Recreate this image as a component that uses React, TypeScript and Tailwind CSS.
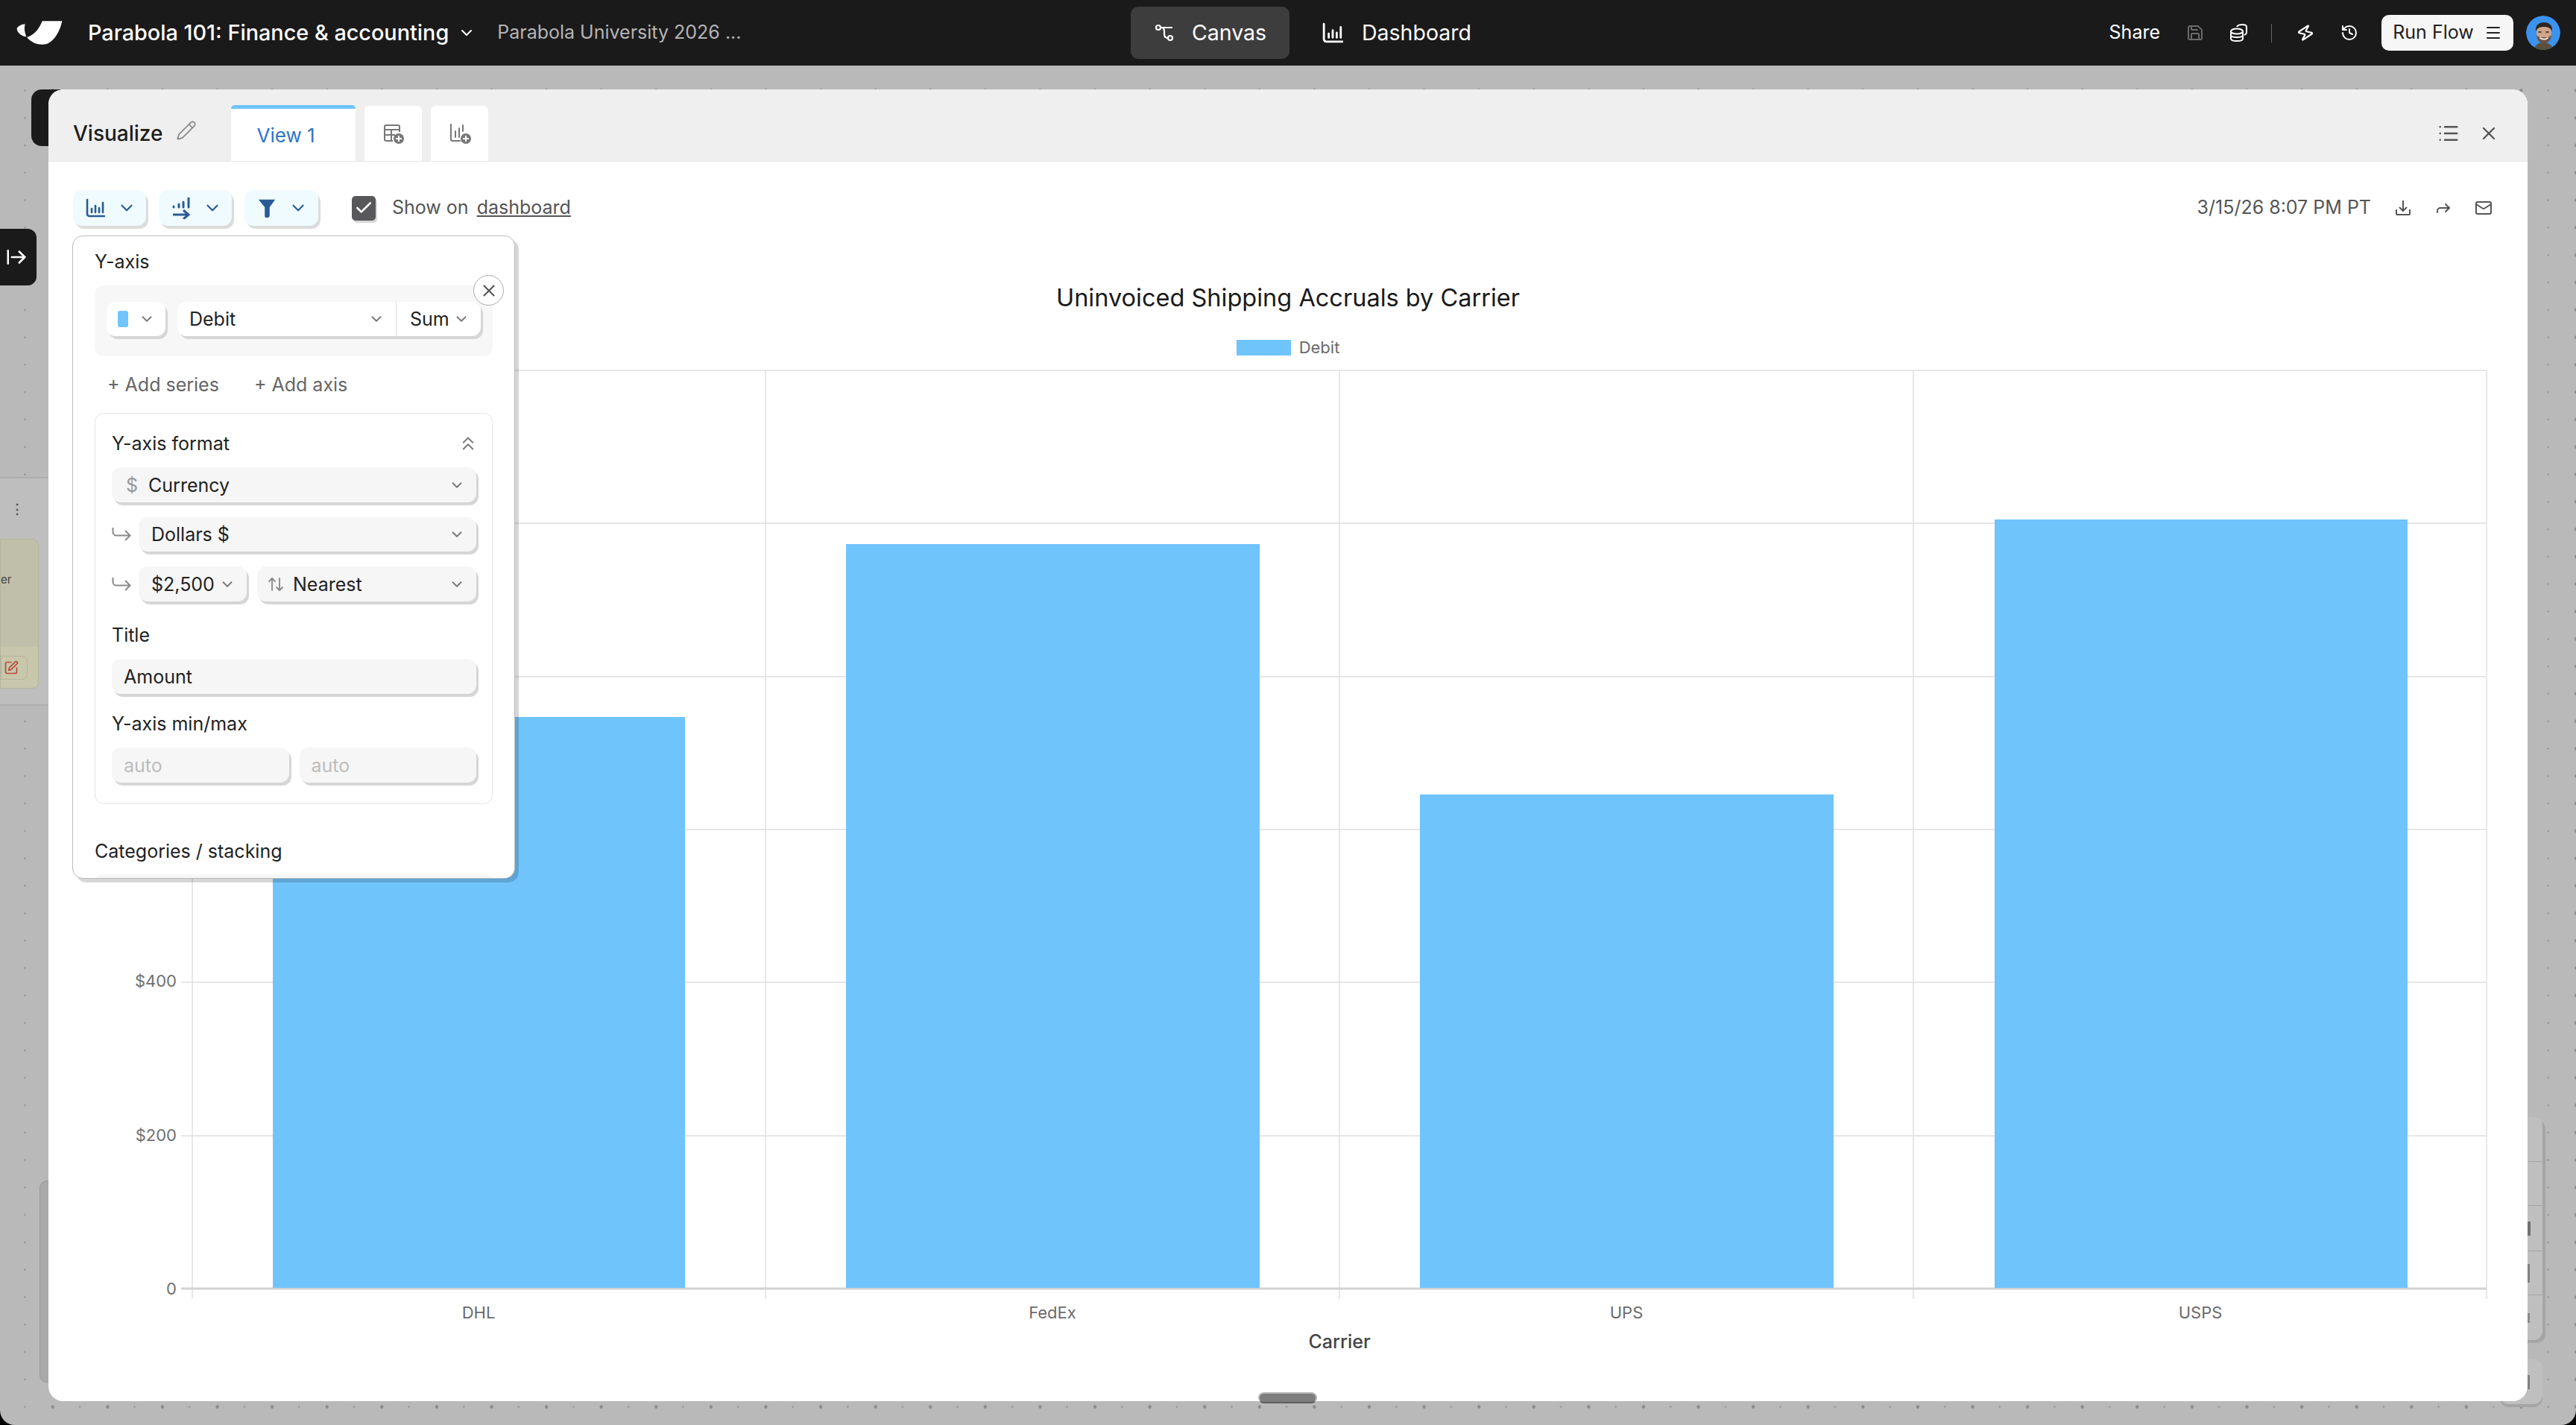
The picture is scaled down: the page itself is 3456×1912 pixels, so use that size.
import type { ReactNode } from 'react'
import {
  ArrowRightFromLine,
  ArrowUpDown,
  Check,
  ChevronDown,
  ChevronsUp,
  Forward,
  History,
  List,
  Mail,
  Menu,
  Pencil,
  Save,
  SquarePen,
  X,
  Zap,
} from 'lucide-react'

const bars = [
  { label: 'DHL', x: 366, top: 962, right: 919, center: 642 },
  { label: 'FedEx', x: 1135, top: 730, right: 1690, center: 1412 },
  { label: 'UPS', x: 1905, top: 1066, right: 2460, center: 2182 },
  { label: 'USPS', x: 2676, top: 697, right: 3230, center: 2952 },
]

const gridY = [497, 702, 908, 1113, 1318, 1524]
const gridX = [258, 1027, 1797, 2567, 3336]

function BarIcon({ className }: { className?: string }) {
  return (
    <svg viewBox="0 0 26 26" fill="none" className={className}>
      <path d="M2 2v19a3 3 0 0 0 3 3h20" stroke="currentColor" strokeWidth="2.6" strokeLinecap="round" />
      <path d="M8 14v5M13 10v9M18 13v6M23 6v13" stroke="currentColor" strokeWidth="2.6" strokeLinecap="round" />
    </svg>
  )
}

function HookArrow() {
  return (
    <svg viewBox="0 0 26 20" fill="none" className="mr-[10px] h-[20px] w-[26px] shrink-0 text-[#8a8a8a]">
      <path d="M1.5 1v6a4.5 4.5 0 0 0 4.5 4.5h18M18 5l6.5 6.5L18 18" stroke="currentColor" strokeWidth="2" />
    </svg>
  )
}

function Logo() {
  return (
    <svg viewBox="0 0 270 180" className="h-[60px] w-[90px]">
      <path d="M38 72C44 62 58 56 71 55C66 72 70 90 76 106C60 104 38 92 38 72Z" fill="#fff" />
      <path d="M140 43H220C212 82 190 122 160 134C128 144 96 130 78 108C108 100 128 74 140 43Z" fill="#fff" />
    </svg>
  )
}

function Avatar() {
  return (
    <svg viewBox="0 0 46 46" className="h-[46px] w-[46px] rounded-full">
      <circle cx="23" cy="23" r="23" fill="#3b93ef" />
      <path d="M10 46c2-7 7-10 13-10s12 3 14 10Z" fill="#5a5040" />
      <ellipse cx="24" cy="23" rx="10" ry="13" fill="#cfa488" />
      <path d="M13 21c-1-9 5-12 11-12s12 3 11 12c-2-4-5-6-11-6s-9 2-11 6Z" fill="#2e2622" />
      <path d="M14 26c1 8 5 11 10 11s9-3 10-11c-2 2-3 3-5 3H19c-2 0-3-1-5-3Z" fill="#6d5040" />
      <path d="M19 30c3 2 7 2 10 0" stroke="#f5ebe2" strokeWidth="2" strokeLinecap="round" fill="none" />
      <path d="M17 22h3M27 22h3" stroke="#2e2622" strokeWidth="1.6" strokeLinecap="round" />
    </svg>
  )
}

function Select({
  className,
  children,
  bg = 'bg-[#f6f6f6]',
  chevron = true,
}: {
  className?: string
  children: ReactNode
  bg?: string
  chevron?: boolean
}) {
  return (
    <div className={`flex items-center rounded-[12px] shadow-[3px_4px_0_0_#d6d6d6] ${bg} ${className ?? ''}`}>
      {children}
      {chevron && <ChevronDown className="ml-auto h-[22px] w-[22px] text-[#777]" strokeWidth={2} />}
    </div>
  )
}

function ToolButton({ children, className }: { children: ReactNode; className: string }) {
  return (
    <div
      className={`flex h-[48px] items-center rounded-[12px] bg-[#f0fbff] pl-[17px] text-[#2b5b94] shadow-[3px_4px_0_0_#dcdcdc] ${className}`}
    >
      {children}
      <ChevronDown className="ml-[16px] h-[26px] w-[26px]" strokeWidth={2} />
    </div>
  )
}

function BackgroundCanvas() {
  return (
    <>
      <div className="absolute left-[42px] top-[32px] h-[76px] w-[40px] rounded-l-[14px] bg-[#1b1a1b]" />
      <div className="absolute left-0 top-[219px] flex h-[76px] w-[49px] items-center justify-end rounded-r-[12px] bg-[#1b1a1b] pr-[12px] text-white">
        <ArrowRightFromLine className="h-[30px] w-[30px]" strokeWidth={2} />
      </div>
      <div className="absolute left-0 top-[552px] h-[307px] w-[70px] border-y-2 border-[#adadad] bg-[#bebebe]">
        <span className="absolute left-[14px] top-[32px] text-[18px] font-bold leading-[18px] text-[#555]">⋮</span>
        <div className="absolute left-0 top-[81px] h-[201px] w-[52px] rounded-r-[8px] border border-[#b5b5a0] bg-[#c0bfa9]">
          <span className="absolute left-0 top-[40px] text-[15px] leading-[28px] text-[#444]">er</span>
          <div className="absolute bottom-0 left-0 h-[55px] w-full rounded-br-[8px] bg-[#c8c7ac]">
            <div className="absolute left-0 top-[12px] flex h-[32px] w-[36px] items-center rounded-r-[8px] border border-[#b5b49c] pl-[3px]">
              <SquarePen className="h-[20px] w-[20px] text-[#b8483f]" strokeWidth={2} />
            </div>
          </div>
        </div>
      </div>
      <div className="absolute left-[53px] top-[1496px] h-[271px] w-[20px] rounded-l-[10px] border border-[#999] bg-[#a9a9a9]" />
      <div className="absolute left-[3380px] top-[1411px] flex h-[299px] w-[31px] flex-col rounded-r-[12px] bg-[#bfbfbf] shadow-[4px_4px_0_0_#a5a5a5]">
        <div className="h-[60px] border-b border-[#a5a5a5]" />
        <div className="h-[59px] border-b border-[#a5a5a5]" />
        <div className="flex h-[61px] items-center justify-end border-b border-[#a5a5a5] pr-[16px]">
          <div className="h-[19px] w-[4px] bg-[#707070]" />
        </div>
        <div className="flex h-[59px] items-center justify-end border-b border-[#a5a5a5] pr-[17px]">
          <div className="h-[25px] w-[3px] bg-[#808080]" />
        </div>
        <div className="flex flex-1 items-center justify-end pr-[17px]">
          <div className="h-[13px] w-[3px] bg-[#8a8a8a]" />
        </div>
      </div>
      <div className="absolute left-[3354px] top-[1736px] flex h-[60px] w-[57px] items-center justify-end rounded-[12px] bg-[#bfbfbf] pr-[17px] shadow-[0_4px_0_0_#a5a5a5]">
        <div className="h-[19px] w-[3px] bg-[#808080]" />
      </div>
    </>
  )
}

function Chart() {
  return (
    <svg viewBox="65 485 3326 1345" className="mt-[8px] block h-[1345px] w-[3326px]">
      {gridY.map((y) => (
        <line key={y} x1="243" x2="3336" y1={y} y2={y} stroke="#e6e6e6" strokeWidth="2" />
      ))}
      {gridX.map((x) => (
        <line key={x} x1={x} x2={x} y1="497" y2="1743" stroke="#e0e0e0" strokeWidth="1.5" />
      ))}
      <line x1="243" x2="3336" y1="1729" y2="1729" stroke="#d2d2d2" strokeWidth="3" />
      {bars.map((b) => (
        <rect key={b.label} x={b.x} y={b.top} width={b.right - b.x} height={1728 - b.top} fill="#70c4fc" />
      ))}
      <g fill="#707070" fontSize="22" textAnchor="end">
        <text x="237" y="1531">$200</text>
        <text x="237" y="1324">$400</text>
        <text x="237" y="1737">0</text>
      </g>
      <g fill="#6b6b6b" fontSize="22" textAnchor="middle">
        {bars.map((b) => (
          <text key={b.label} x={b.center} y="1769">{b.label}</text>
        ))}
      </g>
      <text x="1797" y="1809" fill="#444" fontSize="25" fontWeight="500" textAnchor="middle">Carrier</text>
    </svg>
  )
}

function AxisPopover() {
  return (
    <div className="absolute left-[32px] top-[196px] h-[863px] w-[594px] overflow-hidden rounded-[14px] border border-[#bbb] bg-white pl-[29px] pr-[29px] pt-[19px] text-[25px] leading-[30px] text-[#222] shadow-[5px_5px_0_0_rgba(0,0,0,0.16)]">
      <div className="h-[30px]">Y-axis</div>
      <div className="mt-[17px] flex h-[95px] gap-[16px] rounded-[12px] bg-[#f7f7f7] px-[16px] pt-[22px]">
        <Select className="h-[46px] w-[79px] pl-[15px] pr-[14px]" bg="bg-white">
          <div className="h-[22px] w-[14px] rounded-[3px] bg-[#70c4fc]" />
        </Select>
        <div className="flex h-[46px] flex-1 items-center rounded-[12px] bg-white shadow-[3px_4px_0_0_#d6d6d6]">
          <div className="flex h-full flex-1 items-center border-r border-[#ddd] pl-[16px] pr-[15px]">
            Debit
            <ChevronDown className="ml-auto h-[22px] w-[22px] text-[#777]" strokeWidth={2} />
          </div>
          <div className="flex h-full w-[113px] items-center pl-[18px] pr-[15px]">
            Sum
            <ChevronDown className="ml-auto h-[22px] w-[22px] text-[#777]" strokeWidth={2} />
          </div>
        </div>
      </div>
      <div className="mt-[23px] flex h-[30px] gap-[47px] pl-[17px] text-[#666]">
        <span>+ Add series</span>
        <span>+ Add axis</span>
      </div>
      <div className="mt-[23px] h-[525px] rounded-[12px] border border-[#e4e4e4] pl-[22px] pr-[21px] pt-[25px]">
        <div className="flex h-[30px] items-center justify-between">
          <span>Y-axis format</span>
          <ChevronsUp className="mr-[-4px] h-[30px] w-[30px] text-[#777]" strokeWidth={1.5} />
        </div>
        <Select className="mt-[17px] h-[47px] pl-[19px] pr-[15px]">
          <span className="mr-[14px] text-[#999]">$</span>
          Currency
        </Select>
        <div className="mt-[20px] flex items-center">
          <HookArrow />
          <Select className="h-[46px] flex-1 pl-[17px] pr-[15px]">Dollars $</Select>
        </div>
        <div className="mt-[20px] flex items-center">
          <HookArrow />
          <Select className="h-[47px] w-[145px] pl-[17px] pr-[15px]">$2,500</Select>
          <Select className="ml-[14px] h-[47px] flex-1 pl-[13px] pr-[15px]">
            <ArrowUpDown className="mr-[11px] h-[24px] w-[24px] text-[#888]" strokeWidth={1.8} />
            Nearest
          </Select>
        </div>
        <div className="mt-[30px] h-[30px]">Title</div>
        <Select className="mt-[17px] h-[47px] pl-[16px]" chevron={false}>Amount</Select>
        <div className="mt-[25px] h-[30px]">Y-axis min/max</div>
        <div className="mt-[17px] flex gap-[14px]">
          <Select className="h-[47px] flex-1 pl-[16px] text-[#bdbdbd]" chevron={false}>auto</Select>
          <Select className="h-[47px] flex-1 pl-[16px] text-[#bdbdbd]" chevron={false}>auto</Select>
        </div>
      </div>
      <div className="mt-[48px] h-[30px]">Categories / stacking</div>
      <div className="mt-[16px] h-[20px] rounded-t-[12px] bg-[#f7f7f7]" />
      <button className="absolute left-[537px] top-[52px] flex h-[41px] w-[41px] items-center justify-center rounded-full border border-[#aaa] bg-white text-[#555]">
        <X className="h-[26px] w-[26px]" strokeWidth={2} />
      </button>
    </div>
  )
}

function VisualizeModal() {
  return (
    <div className="absolute left-[65px] top-[32px] flex h-[1760px] w-[3326px] flex-col rounded-[20px] bg-white">
      <div className="flex h-[97px] shrink-0 items-end rounded-t-[20px] border-b border-[#e6e6e6] bg-[#efefef] pl-[33px] pr-[38px]">
        <div className="flex h-[74px] w-[212px] items-center text-[28px] font-medium text-[#1c1c1c]">
          Visualize
          <Pencil className="ml-[18px] mt-[-8px] h-[28px] w-[28px] text-[#888]" strokeWidth={1.5} />
        </div>
        <div className="flex h-[75px] w-[167px] items-center justify-center rounded-t-[5px] border-t-[5px] border-[#70c4fc] bg-white pr-[20px] text-[26px] text-[#2f75c6]">
          View 1
        </div>
        <div className="ml-[12px] flex h-[74px] w-[77px] items-center justify-center rounded-t-[6px] bg-white text-[#777]">
          <svg viewBox="0 0 30 30" fill="none" className="h-[30px] w-[30px]">
            <path d="M14 25H5a2 2 0 0 1-2-2V6a2 2 0 0 1 2-2h16a2 2 0 0 1 2 2v7M3 10h20M3 17h14M12 10v15" stroke="currentColor" strokeWidth="2" />
            <circle cx="22" cy="22" r="7" fill="currentColor" />
            <path d="M22 18v8M18 22h8" stroke="#fff" strokeWidth="2" />
          </svg>
        </div>
        <div className="ml-[12px] flex h-[74px] w-[77px] items-center justify-center rounded-t-[6px] bg-white text-[#777]">
          <svg viewBox="0 0 30 30" fill="none" className="h-[30px] w-[30px]">
            <path d="M3 3v20a2 2 0 0 0 2 2h10M9 12v8M14 8v12M19 4v8" stroke="currentColor" strokeWidth="2" strokeLinecap="round" />
            <circle cx="23" cy="22" r="7" fill="currentColor" />
            <path d="M23 18v8M19 22h8" stroke="#fff" strokeWidth="2" />
          </svg>
        </div>
        <div className="ml-auto flex h-[74px] items-center gap-[25px] text-[#555]">
          <List className="h-[30px] w-[30px]" strokeWidth={2} />
          <X className="h-[28px] w-[28px]" strokeWidth={2} />
        </div>
      </div>

      <div className="mt-[38px] flex h-[48px] shrink-0 items-center pl-[33px] pr-[47px]">
        <ToolButton className="w-[98px] gap-0">
          <BarIcon className="h-[26px] w-[26px]" />
        </ToolButton>
        <ToolButton className="ml-[17px] w-[98px]">
          <svg viewBox="0 0 26 30" fill="none" className="h-[30px] w-[26px]">
            <path d="M3 13v1M10 10v4M16 7v7M23 2v12" stroke="currentColor" strokeWidth="3" strokeLinecap="round" />
            <path d="M2 24h21M16 18l7 6-7 6" stroke="currentColor" strokeWidth="3" />
          </svg>
        </ToolButton>
        <ToolButton className="ml-[17px] w-[99px]">
          <svg viewBox="0 0 26 30" className="h-[28px] w-[26px]">
            <path d="M1 3h24l-8 11v13l-2 2h-4l-1-2V14Z" fill="currentColor" />
          </svg>
        </ToolButton>
        <div className="ml-[45px] flex h-[33px] w-[32px] items-center justify-center rounded-[5px] bg-[#58585a] shadow-[2px_3px_0_0_#d8d8d8]">
          <Check className="h-[26px] w-[26px] text-white" strokeWidth={2.4} />
        </div>
        <span className="ml-[22px] text-[25px] text-[#555]">Show on</span>
        <span className="ml-[11px] text-[25px] text-[#555] underline">dashboard</span>
        <span className="ml-auto text-[25px] text-[#555]">3/15/26 8:07 PM PT</span>
        <svg viewBox="0 0 24 24" fill="none" className="ml-[31px] h-[24px] w-[24px] text-[#555]">
          <path d="M12 2v13M7 11l5 5 5-5M3 14v6a1 1 0 0 0 1 1h16a1 1 0 0 0 1-1v-6" stroke="currentColor" strokeWidth="2" />
        </svg>
        <Forward className="ml-[30px] h-[24px] w-[24px] text-[#555]" strokeWidth={2} />
        <Mail className="ml-[30px] h-[24px] w-[24px] text-[#555]" strokeWidth={2} />
      </div>

      <div className="mt-[77px] text-center text-[32.5px] leading-[40px] text-[#1a1a1a]">
        Uninvoiced Shipping Accruals by Carrier
      </div>
      <div className="mt-[36px] flex h-[21px] items-center justify-center gap-[11px] text-[22px] text-[#6b6b6b]">
        <div className="h-[21px] w-[73px] bg-[#70c4fc]" />
        Debit
      </div>
      <Chart />
      <AxisPopover />
      <div className="absolute left-[1623px] top-[1748px] h-[15px] w-[79px] rounded-full border-2 border-[#b5b5b5] border-b-[#5e5e5e] bg-[#7d7d7d]" />
    </div>
  )
}

export default function App() {
  return (
    <div className="flex h-[1912px] w-full flex-col overflow-hidden bg-black font-['Inter',sans-serif]">
      <header className="flex h-[88px] shrink-0 items-center bg-[#1b1a1b] text-white">
        <div className="flex w-[1517px] shrink-0 items-center pl-[10px]">
          <Logo />
          <span className="ml-[18px] text-[28.8px] font-medium">Parabola 101: Finance &amp; accounting</span>
          <ChevronDown className="ml-[12px] h-[24px] w-[24px]" strokeWidth={2} />
          <span className="ml-[29px] text-[25px] text-[#b4b4b4]">Parabola University 2026 ...</span>
        </div>
        <nav className="flex items-center text-[28.5px]">
          <div className="flex h-[70px] w-[213px] items-center rounded-[10px] bg-[#3e3d3e] pl-[32px]">
            <svg viewBox="0 0 26 26" fill="none" className="h-[26px] w-[26px]">
              <circle cx="5" cy="6" r="3" stroke="currentColor" strokeWidth="2.2" />
              <circle cx="21" cy="20" r="3" stroke="currentColor" strokeWidth="2.2" />
              <path d="M8 6h16M9 6c3 0 4 2 4 5v4c0 3 2 5 5 5" stroke="currentColor" strokeWidth="2.2" />
            </svg>
            <span className="ml-[24px]">Canvas</span>
          </div>
          <BarIcon className="ml-[44px] h-[28px] w-[28px]" />
          <span className="ml-[25px]">Dashboard</span>
        </nav>
        <div className="ml-auto flex items-center pr-[21px]">
          <span className="text-[25px]">Share</span>
          <Save className="ml-[35px] h-[24px] w-[24px] text-[#6b6b6b]" strokeWidth={2} />
          <svg viewBox="0 0 24 24" fill="none" className="ml-[34px] h-[24px] w-[24px]">
            <ellipse cx="10" cy="10" rx="8" ry="3.5" stroke="currentColor" strokeWidth="2" />
            <path d="M2 10v10c0 2 4 3 8 3s8-1 8-3V10M2 15c0 2 4 3 8 3s8-1 8-3M10 4c1-2 4-3 7-3 4 0 6 1 6 3v8c0 1-1 2-3 3" stroke="currentColor" strokeWidth="2" />
          </svg>
          <div className="ml-[32px] h-[25px] w-px bg-[#666]" />
          <Zap className="ml-[33px] h-[24px] w-[24px] rotate-[12deg]" strokeWidth={2.2} />
          <History className="ml-[35px] h-[24px] w-[24px]" strokeWidth={2} />
          <div className="ml-[31px] flex h-[48px] w-[177px] items-center justify-center gap-[14px] rounded-[10px] bg-[#f6f6f6] text-[25px] text-[#222]">
            Run Flow
            <Menu className="h-[24px] w-[24px]" strokeWidth={2} />
          </div>
          <div className="ml-[17px]">
            <Avatar />
          </div>
        </div>
      </header>
      <main className="relative flex-1 rounded-b-[20px] bg-[#b9b9b9] bg-[radial-gradient(circle,#8c8c8c_2px,transparent_2.5px),radial-gradient(circle,#989898_1px,transparent_1.5px)] bg-[length:73.6px_36.8px,36.8px_36.8px] bg-[position:34px_15px,15px_15px]">
        <BackgroundCanvas />
        <VisualizeModal />
      </main>
    </div>
  )
}
